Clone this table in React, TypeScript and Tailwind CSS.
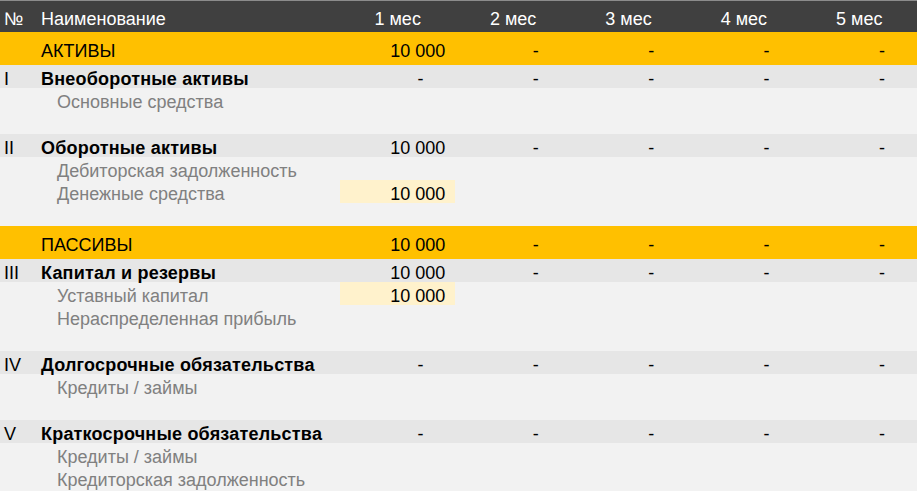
import React from 'react'

type Kind = 'section' | 'group' | 'item' | 'blank'

interface Row {
  kind: Kind
  num?: string
  name?: string
  values?: (string | null)[]
  input?: boolean
}

const dash = ['-', '-', '-', '-', '-']
const first = (v: string) => [v, '-', '-', '-', '-']
const empty = [null, null, null, null, null]

const rows: Row[] = [
  { kind: 'section', name: 'АКТИВЫ', values: first('10 000') },
  { kind: 'group', num: 'I', name: 'Внеоборотные активы', values: dash },
  { kind: 'item', name: 'Основные средства', values: empty },
  { kind: 'blank' },
  { kind: 'group', num: 'II', name: 'Оборотные активы', values: first('10 000') },
  { kind: 'item', name: 'Дебиторская задолженность', values: empty },
  { kind: 'item', name: 'Денежные средства', values: ['10 000', null, null, null, null], input: true },
  { kind: 'blank' },
  { kind: 'section', name: 'ПАССИВЫ', values: first('10 000') },
  { kind: 'group', num: 'III', name: 'Капитал и резервы', values: first('10 000') },
  { kind: 'item', name: 'Уставный капитал', values: ['10 000', null, null, null, null], input: true },
  { kind: 'item', name: 'Нераспределенная прибыль', values: empty },
  { kind: 'blank' },
  { kind: 'group', num: 'IV', name: 'Долгосрочные обязательства', values: dash },
  { kind: 'item', name: 'Кредиты / займы', values: empty },
  { kind: 'blank' },
  { kind: 'group', num: 'V', name: 'Краткосрочные обязательства', values: dash },
  { kind: 'item', name: 'Кредиты / займы', values: empty },
  { kind: 'item', name: 'Кредиторская задолженность', values: empty },
]

const months = ['1 мес', '2 мес', '3 мес', '4 мес', '5 мес']

const grid = 'grid grid-cols-[36px_304px_repeat(5,minmax(0,1fr))]'

function TableRow({ row }: { row: Row }) {
  if (row.kind === 'blank') return <div className="h-[23px]" />

  const rowCls =
    row.kind === 'section'
      ? 'h-[33px] bg-[#ffc000] text-black'
      : row.kind === 'group'
        ? 'h-[23px] bg-[#e6e6e6] text-black'
        : 'h-[23px] text-[#808080]'
  // text sits a little low in each cell, more so in the tall section rows
  const pt = row.kind === 'section' ? 'pt-[5px]' : 'pt-[4px]'

  return (
    <div className={`${grid} items-center ${rowCls}`}>
      <div className={`pl-[4px] ${pt} text-black`}>{row.num}</div>
      <div
        className={`${pt} ${row.kind === 'item' ? 'pl-[21px]' : row.kind === 'group' ? 'pl-[5px] font-bold tracking-[0.2px]' : 'pl-[5px]'}`}
      >
        {row.name}
      </div>
      {row.values!.map((v, i) => (
        <div
          key={i}
          className={`h-full flex flex-col justify-center ${pt} text-black ${row.input && i === 0 && v ? 'bg-[#fff2cc]' : ''}`}
        >
          {v === null ? null : v === '-' ? (
            <span className="text-right pr-[32px]">-</span>
          ) : (
            <span className="text-right pr-[10px]">{v}</span>
          )}
        </div>
      ))}
    </div>
  )
}

export default function App() {
  return (
    <div className="w-[917px] h-[491px] overflow-hidden bg-[#f2f2f2] text-[18px] leading-none font-['Liberation_Sans',Arial,sans-serif]">
      {/* Header */}
      <div className={`${grid} h-[32px] items-center pt-[4px] bg-[#404040] text-white border-t border-[#8c8c8c]`}>
        <div className="pl-[4px]">№</div>
        <div className="pl-[5px]">Наименование</div>
        {months.map((m) => (
          <div key={m} className="text-center">{m}</div>
        ))}
      </div>
      {rows.map((r, i) => (
        <TableRow key={i} row={r} />
      ))}
    </div>
  )
}
